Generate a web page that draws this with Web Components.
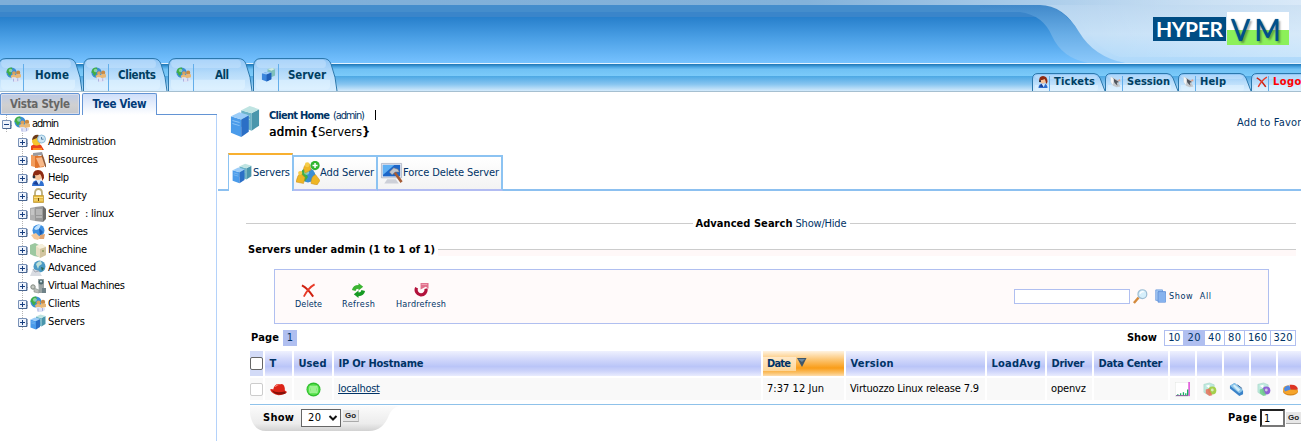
<!DOCTYPE html>
<html lang="en">
<head>
<meta charset="utf-8">
<title>HyperVM - Servers</title>
<style>
html,body{margin:0;height:441px;overflow:hidden;background:#fff}
body{font:11px/14px "DejaVu Sans Condensed","DejaVu Sans",sans-serif;font-stretch:condensed;color:#000}
</style>
</head>
<body>
<hv-app></hv-app>
<script>
const define=(name,html,after)=>customElements.define(name,class extends HTMLElement{
  connectedCallback(){
    if(this.shadowRoot)return;
    const t=document.createElement('template');
    t.innerHTML=typeof html==='function'?html(this):html;
    this.attachShadow({mode:'open'}).append(t.content.cloneNode(true));
    if(after)after(this);
  }
});

/* text set to a known width by tracking */
define('fit-text','<style>:host{display:inline-block;white-space:pre;flex:none}:host([b]){font-weight:bold}</style><slot></slot>',el=>{
  const w=+el.getAttribute('w'),n=el.textContent.length;
  el.style.width='auto';
  const r=el.getBoundingClientRect().width;
  if(w&&r){el.style.letterSpacing=((w-r)/Math.max(1,n-1))+'px';el.style.width=w+'px';}
});

const box=(x,y,l,r,t)=>`<path d="M${x} ${y+2.500}l5.500 1.500v8.500l-5.500-2z" fill="${l}"/><path d="M${x+5.500} ${y+4}l4-2v8l-4 2.500z" fill="${r}"/><path d="M${x} ${y+2.500}l4.500-2 5 1.500-4 2z" fill="${t}"/><path d="M${x+.8} ${y+4.500}l3.800 1M${x+.8} ${y+6}l3.800 1" stroke="${t}" stroke-width=".5" opacity=".8"/>`;
const globe=(x,y,r)=>`<circle cx="${x}" cy="${y}" r="${r}" fill="#3b8fd4"/><path d="M${x-r} ${y}q0-${r} ${r}-${r}l1 2-2 2 1 2-2 3q-2-1-2-3z" fill="#3fae49"/><circle cx="${x-r*.2}" cy="${y-r*.4}" r="${r*.35}" fill="#bfe8d8" opacity=".6"/>`;
const page=c=>`<path d="M2 2.500l6-1.500 5 2v8l-6 3-5-3z" fill="#bfeadf" stroke="#9ccfc0" stroke-width=".5"/><path d="M4 4l4-1v4z" fill="#fff"/><circle cx="11" cy="9" r="4.300" fill="${c[0]}"/><path d="M4 8l4-1 1 3 2 4-3 1-4-3z" fill="${c[1]}" opacity=".85"/><circle cx="11" cy="8.500" r="1.500" fill="#eef6e8" opacity=".7"/>`;
const ICONS={
 clients:globe(6,6,5.500)+'<circle cx="8.500" cy="6.500" r="2" fill="#d9a05c"/><circle cx="13" cy="6" r="2.200" fill="#c98a44"/><path d="M5 9.500q3-3 5.500-.5v3H6zM10 9q3-3 6-1v3l-5 1z" fill="#e8b878"/><path d="M6 11h4l1 1h4v2l-3 2H8z" fill="#dfe3f6"/><path d="M8 12.500v3M12.500 12v3" stroke="#a9afdf"/>',
 servers:box(6,0,'#6db4c8','#4a96ac','#bfe4e2')+box(.5,3,'#4a9bea','#2b6fc6','#9ccdf8'),
 server2:'<path d="M7 2l5-1 3 1v7l-4 2-4-1z" fill="#7fc0bc"/><path d="M7 2l5-1 3 1-4 2z" fill="#cfeae4"/><path d="M1 7l6-2 4 1v7l-5 2.500-5-2z" fill="#3b86dc"/><path d="M1 7l6-2 4 1-5 2z" fill="#9ccbf6"/><path d="M6 8l5-2v7l-5 2.500z" fill="#1f5fb8"/>',
 admin:'<path d="M1 16v-4q5-4 10-1l3 5z" fill="#e8441c"/><path d="M3 16v-2h9v2" fill="#ff8a1c"/><circle cx="6.500" cy="7" r="4.500" fill="#f7c52b"/><path d="M2 6q1-6 7-5l-2 3z" fill="#6a3a1a"/><circle cx="11.500" cy="5" r="4" fill="#cfe6f4" stroke="#7ab0d0" stroke-width=".8"/><path d="M11.500 3v2.200h2" stroke="#3a6890" fill="none" stroke-width=".8"/>',
 resources:'<path d="M1 3l7-1v14l-7-2z" fill="#f29d5c"/><path d="M3 1l9-1 1 3-10 1z" fill="#9a9aa0"/><path d="M5 4h7l2 11-9 1z" fill="#e0742c"/><path d="M6 6l4 9 5-1-1-9z" fill="#f8b888"/><path d="M12 3l4 12" stroke="#8e5a3a" stroke-width="1.500"/>',
 help:'<path d="M2 16q0-6 6-6t6 6z" fill="#2f6fd0"/><path d="M3 14l4-4 2 5z" fill="#1a3f94"/><path d="M6 10h5l-2 5z" fill="#d8ecff"/><circle cx="8" cy="6" r="4" fill="#f6c39a"/><path d="M3 8q-1-8 5-8t6 8l-2 3q0-5-2-7-3 2-5 1v3z" fill="#8e2a12"/><circle cx="4" cy="7" r="1.400" fill="#29333f"/>',
 security:'<path d="M5 8V5q0-4 3.500-4T12 5v3" fill="none" stroke="#bcae7c" stroke-width="1.800"/><path d="M3.500 7.500h10v7h-10z" fill="#e4b83c" stroke="#c09a3c" stroke-width=".8"/><path d="M4 9.500h9M4 12h9" stroke="#f8e08c"/><path d="M8 10h1v3H8z" fill="#6a4a08"/>',
 linux:'<path d="M0 2l5-1v14l-5-1z" fill="#b0b0b0"/><path d="M5 1l8-1v16l-8-1z" fill="#989898"/><path d="M13 0l3 3v10l-3 3z" fill="#6c6c6c"/><path d="M1 4h3M1 6h3M6 4h6M6 6h6M6 8h6M1 8h3M6 11h6" stroke="#e4e4e4" stroke-width=".8"/>',
 services:'<circle cx="8.500" cy="6.500" r="6" fill="#3e8fe0"/><path d="M4 5q3-5 7-4l-2 4-3 1z" fill="#bfe2ff"/><path d="M9 4l4 4-3 4" fill="#1d5fb4"/><path d="M1 11l5-2 4 4-2 3-4-1z" fill="#f4c89a"/><path d="M15 10l-5 1-1 4 5 0z" fill="#e3a470"/>',
 machine:'<path d="M0 3l5-2 4 2v12l-5-1-4-2z" fill="#9cc8a0"/><path d="M6 4l6-2 4 3v8l-6 3-4-3z" fill="#e8dfc4"/><path d="M6 4l6-2 4 3-6 2z" fill="#f6f0dc"/><path d="M10 7l6-2v8l-6 3z" fill="#d2c5a0"/><circle cx="13" cy="9" r="1" fill="#8a9c60"/>',
 advanced:'<circle cx="9.500" cy="6.500" r="6" fill="#4b9ac4"/><path d="M6 4q2-3 5-3l1 3-3 2-1 3z" fill="#bfe0d8"/><path d="M11 7l3 1-2 3z" fill="#2b6a50"/><path d="M0 16l3-7 6 2 3 5z" fill="#d9dce2"/><path d="M3 9l2 3 4-1" stroke="#a6aab4" fill="none"/>',
 vm:'<path d="M8 1h6v14H9z" fill="#9aa4a4"/><circle cx="11" cy="4" r="2.500" fill="#4f6a70"/><circle cx="11" cy="3.500" r="1" fill="#cfe8ee"/><circle cx="3" cy="9" r="2.200" fill="#c7cbc4" stroke="#808880"/><path d="M4 10l5 2v3l-5-1z" fill="#b8bdb8" stroke="#858d88" stroke-width=".6"/><path d="M12 10h4v5h-4z" fill="#6f8288"/>',
 add:globe(8,9.500,4.800)+'<path d="M5 5q1-4 4-3l1 4-4 2zM0 14q1-5 3-6l3 3-1 4zM10 15q0-5 3-6l3 4-2 3z" fill="#eeb625" stroke="#c2871a" stroke-width=".3"/><circle cx="7.500" cy="2.500" r="1.600" fill="#f6cc48"/><circle cx="2.800" cy="8" r="1.400" fill="#f6cc48"/><circle cx="12.700" cy="3" r="3.100" fill="#2fb52f"/><path d="M12.700 1.300v3.400M11 3h3.400" stroke="#fff"/>',
 force:'<path d="M1 1h14v10H1z" fill="#e3e6ee" stroke="#a5adbd" stroke-width=".5"/><path d="M2 2h12v8H2z" fill="#1c66c8"/><path d="M2 2h8L2 9z" fill="#5fb0f4"/><path d="M5 12h6l2 3H3z" fill="#cdd0d8"/><path d="M10 7l5 7" stroke="#a55c35" stroke-width="1.800"/><path d="M6.500 7l3-3 3 1 1 2-3 0-2 2z" fill="#c0c5cd" stroke="#697080" stroke-width=".4"/>',
 x:'<path d="M1 2.500q6 3 12 12" stroke="#cf2010" stroke-width="2.100" fill="none"/><path d="M14.500 1.500Q8 5 3 14.500" stroke="#e83a28" stroke-width="1.900" fill="none"/>',
 session:'<path d="M1 1l13 6-3 2 3 5-5 1-5-2-3-5z" fill="#c4c8cc"/><path d="M4 3l8 5-3 1 1 4-4-4z" fill="#4f545c"/><path d="M1 1l4 3-1 8-3-4z" fill="#f4f4f4"/><path d="M10 6l3-2 1 3z" fill="#e2a08c"/>',
 refresh:'<path d="M1 7.500Q2 2 8 2V0l5 4-5 4V6Q5 6 5 8.500z" fill="#3cb432"/><path d="M15 8.500Q14 14 8 14v2l-5-4 5-4v2q3 0 3-2.500z" fill="#169a22"/>',
 hard:'<path d="M2.800 5A5.300 5.300 0 1 0 12.700 6" stroke="#b3123c" stroke-width="3.400" fill="none"/><path d="M7 7V0h8.500v6l-3-2z" fill="#e0708c"/><path d="M8 1.500h6" stroke="#f1a6b8"/>',
 mag:'<path d="M1 15l5-6" stroke="#d48a3c" stroke-width="2.600"/><circle cx="10" cy="5.500" r="4.700" fill="#d6effb" stroke="#9dbdd4" stroke-width="1.300"/><path d="M7.500 5q1-2.500 4-2" stroke="#fff" stroke-width="1.300" fill="none"/>',
 copy:'<path d="M1 1h9v12H1z" fill="#a9cbf4" stroke="#6a9ade"/><path d="M4 3h10v12H4z" fill="#8ab4ee" stroke="#5a8ad4"/><path d="M6 5h8v10H6z" fill="#86b2ee"/>',
 hat:'<path d="M0 8q2-1 3 0 1-6 5-6 1 1 3 0 3 0 3 7 2 1 2 2-3 3-8 3Q2 13 0 8z" fill="#dc2418"/><path d="M2 9q4 3 12 1l1 2q-3 2-8 1-4-1-5-4z" fill="#861008"/><path d="M5 5q1-2 3-2" stroke="#ff8878" fill="none"/>',
 green:'<circle cx="8" cy="8" r="7.500" fill="#2ebc2c"/><ellipse cx="8" cy="8" rx="6.500" ry="6" fill="#54e04a"/><path d="M5 4h6v8H5z" fill="#9cf290"/><path d="M4.500 4q-1 4 0 8M11.500 4q1 4 0 8" stroke="#d2ffc8" stroke-width=".9"/>',
 chart:'<path d="M0 0h16v16H0z" fill="#fff" stroke="#dfe3df"/><path d="M15 0v15" stroke="#d824d0" stroke-width="1.300"/><path d="M1 14.500h13" stroke="#884898"/><path d="M3 14v-1M6 14v-2M9 14v-3M11.500 14v-2M13.500 14V8" stroke="#16b060" stroke-width="1.400"/>',
 page1:page(['#a4d04c','#e8705c']),
 page2:page(['#8f62d6','#6fcf88']),
 disk:'<path d="M1 4l5-3 9 8v4l-4 2-10-8z" fill="#3a82c8"/><path d="M1 4l5-3 9 8-4 3z" fill="#8cc6ea"/><path d="M4 4l2-1 6 5-2 2z" fill="#d6eef8"/><path d="M9 3l5 4" stroke="#2c5f94"/>',
 pie:'<ellipse cx="8" cy="10" rx="8" ry="4.500" fill="#d6861a"/><path d="M0 8q0-4 6-4.500L8 8l8 1q-1 4-8 4Q0 13 0 8z" fill="#f6a42a"/><path d="M7 3q8-1 9 5L8 8z" fill="#dd3424"/><path d="M1 7q2-4 6-3l1 4-6 2z" fill="#4f88e0"/>'
};
define('ui-icon',el=>`<style>:host{display:block;flex:none;width:${el.getAttribute('s')||16}px;height:${el.getAttribute('h')||el.getAttribute('s')||16}px}svg{display:block;width:100%;height:100%}</style><svg viewBox="0 0 16 16" fill="none" preserveAspectRatio="none">${ICONS[el.getAttribute('n')]}</svg>`);

define('nav-tab',el=>{
  const s=el.hasAttribute('small'),W=s?74:85,H=s?18:33,sep=s?17:25,r=s?5:8;
  const d=s?`M.5 ${H}V6Q.5 .5 6 .5H62Q66 .5 68 5L73 ${H}`:`M.5 ${H}V8Q1 .5 8 .5H70Q76 .5 78 6Q83 19 84 ${H}`;
  return `<style>:host{display:grid;width:${W}px;height:${H}px;flex:none;color:#003f62}svg,div{grid-area:1/1}
  div{display:flex;align-items:center;position:relative}ui-icon{margin:0 0 0 ${s?5:8}px}.l{display:flex;${s?`padding-left:${5}px`:'width:58px;justify-content:center;margin-left:2px;margin-top:1px'}}</style>
  <svg width="${W}" height="${H}" fill="none"><defs><linearGradient id="g" x2="0" y2="1"><stop stop-color="#8dc4f6"/><stop offset=".45" stop-color="#b5dbfa"/><stop offset="1" stop-color="#d8eeff"/></linearGradient></defs>
  <path d="${d}z" fill="url(#g)"/><path d="M4 2h${s?58:66}q3 0 3 ${s?2:4}t-3 ${s?2:4}H8q-5 0-5-${s?3:5}z" fill="#cfe7fc" opacity=".45"/><path d="M3 ${H*.66}h${W-11}v${s?3:6}q0 4-4 4H7q-4 0-4-4z" fill="#e6f5ff" opacity=".5"/>
  <path d="${d}" stroke="#2b78ad"/><path d="M${sep}.5 ${s?3:6}v${H}" stroke="#63aeea"/></svg>
  <div><ui-icon n="${el.getAttribute('icon')}" s="${s?12:15}"></ui-icon><span class="l"><slot></slot></span></div>`;
});

define('hv-header',`<style>:host{display:grid;height:92px;overflow:hidden;font-size:11.500px;grid-template-columns:1301px}
.bg,.fg{grid-area:1/1}.fg{display:flex;justify-content:space-between;position:relative}
.tabs{display:flex;align-self:end;margin-bottom:1px}
.tabs.l{margin-left:-2px}.right{display:flex;flex-direction:column;justify-content:space-between;width:269px}
.right .tabs{align-self:start;width:269px;font-size:11px}.right nav-tab{margin-right:-1px}
</style>
<svg class="bg" width="1301" height="92"><defs>
<linearGradient id="a" x2="0" y2="1"><stop stop-color="#277fcb"/><stop offset=".45" stop-color="#4a9fe5"/><stop offset="1" stop-color="#76c2ff"/></linearGradient>
<linearGradient id="b" x2="0" y2="1"><stop stop-color="#1b75b6"/><stop offset=".12" stop-color="#4fa9e6"/><stop offset=".2" stop-color="#70c1f4"/><stop offset=".45" stop-color="#7bcbfa"/><stop offset=".46" stop-color="#4fa9e4"/><stop offset=".75" stop-color="#87c5f0"/><stop offset="1" stop-color="#d3eafc"/></linearGradient>
<linearGradient id="c"><stop stop-color="#7eaed8"/><stop offset=".62" stop-color="#83b2da"/><stop offset=".82" stop-color="#b0d0ec"/><stop offset="1" stop-color="#c9e0f5"/></linearGradient>
<linearGradient id="d" x2="0" y2="1"><stop stop-color="#b8d5ef"/><stop offset=".5" stop-color="#c5e0f7"/><stop offset="1" stop-color="#aed9fb"/></linearGradient>
<linearGradient id="e" x2="1"><stop stop-color="#fff" stop-opacity="0"/><stop offset="1" stop-color="#fff" stop-opacity=".3"/></linearGradient>
<linearGradient id="f" x2="0" y2="1"><stop stop-color="#4189ca"/><stop offset=".5" stop-color="#68ade6"/><stop offset="1" stop-color="#8cc9fb"/></linearGradient></defs>
<rect width="1301" height="5" fill="url(#c)"/><rect y="5" width="1301" height="7" fill="#448dcc"/><rect y="12" width="1301" height="5" fill="#3a85ca"/><rect y="17" width="1301" height="46" fill="url(#a)"/>
<path d="M980 5h62Q1063 8 1078 30Q1092 55 1125 63H1088Q1062 58 1052 36Q1043 15 1020 12H980z" fill="url(#f)"/>
<path d="M1040 5H1301V63H1125Q1094 57 1079 32Q1063 5 1040 5z" fill="url(#d)"/><path d="M1070 0H1301V57H1120Q1094 50 1070 5z" fill="url(#e)"/>
<rect y="63" width="1301" height="1" fill="#e4f3ff"/><rect y="64" width="1301" height="27" fill="url(#b)"/><rect y="91" width="1301" height="1" fill="#a5bfd0"/></svg>
<div class="fg"><div class="tabs l">
<nav-tab icon="clients"><fit-text b w="34">Home</fit-text></nav-tab><nav-tab icon="clients"><fit-text b w="38">Clients</fit-text></nav-tab><nav-tab icon="clients"><fit-text b w="14">All</fit-text></nav-tab><nav-tab icon="server2"><fit-text b w="38">Server</fit-text></nav-tab></div>
<div class="right"><hv-logo></hv-logo><div class="tabs">
<nav-tab small icon="help"><fit-text b w="41">Tickets</fit-text></nav-tab><nav-tab small icon="session"><fit-text b w="43">Session</fit-text></nav-tab><nav-tab small icon="session"><fit-text b w="26">Help</fit-text></nav-tab><nav-tab small icon="x"><fit-text b w="41" style="color:#f00">Logout</fit-text></nav-tab></div></div></div>`);

define('hv-logo',`<style>:host{display:flex;margin:12px 0 0 121px;width:136px;height:33px;align-items:flex-start;color:#fff}
.h{background:#004d84;width:73px;height:24px;margin:5px 1px 0 0;display:flex;justify-content:center;align-items:center;font:bold 21px/24px Lato,sans-serif;font-stretch:normal}
.v{width:62px;height:33px;background:linear-gradient(#fff 18px,#8cf05a 18px);color:#00508c;display:flex;padding-left:4px;box-sizing:border-box;font:30px/35px Lato,sans-serif;font-stretch:normal;text-shadow:2px 2px 2px #2226,0 0 1px #00508c}.v fit-text{transform:scaleX(.94);transform-origin:0 0}</style>
<div class="h"><fit-text w="67">HYPER</fit-text></div><div class="v"><fit-text w="50">VM</fit-text></div>`);

define('tree-row',el=>`<style>:host{display:flex;height:18px;align-items:center;padding-left:${el.hasAttribute('root')?2:18}px}
svg{margin:0 2px 0 0;flex:none}ui-icon{margin-right:2px}</style>
<svg width="10" height="18" fill="none"><path d="M4.500 0v18M9 10.500h1" stroke="#b4b4b4" stroke-dasharray="1 1"/><path d="M.5 5.500h8v8h-8z" fill="#eef3fc" stroke="#7b93b8"/><path d="M1 13.500h8V6" stroke="#49658f"/><path d="M2 9.500h5${el.hasAttribute('root')?'':'M4.500 7v5'}" stroke="#173f80"/></svg><ui-icon n="${el.getAttribute('icon')}"></ui-icon><slot></slot>`);

define('hv-side',`<style>:host{display:block;width:217px;height:349px;flex:none;box-sizing:border-box}
.tabs{display:flex;height:22px;margin-top:1px;font-size:11.500px;line-height:20px;box-sizing:border-box}
.tabs div{box-sizing:border-box;border:1px solid #6394d4;border-radius:2px 2px 0 0;display:flex;justify-content:center}
.one{width:80px;background:linear-gradient(#bccbe8,#d0d0d0 55%,#c6c8cc);color:#666;margin-right:2px;height:22px;box-shadow:inset 0 0 0 1px #d8dce8}
.two{width:75px;background:linear-gradient(#cfdffa,#fff);border-bottom:0!important;color:#003a78}
.rest{flex:1;border-bottom:1px solid #6394d4}
.tree{border-right:1px solid #b4d2fa;height:326px;box-sizing:border-box;margin-top:0}
</style><div class="tabs"><div class="one"><fit-text b w="60">Vista Style</fit-text></div><div class="two"><fit-text b w="54">Tree View</fit-text></div><span class="rest"></span></div>
<div class="tree"><tree-row root icon="clients"><fit-text w="27">admin</fit-text></tree-row>
<tree-row icon="admin"><fit-text w="68">Administration</fit-text></tree-row><tree-row icon="resources"><fit-text w="50">Resources</fit-text></tree-row><tree-row icon="help"><fit-text w="21">Help</fit-text></tree-row><tree-row icon="security"><fit-text w="39">Security</fit-text></tree-row><tree-row icon="linux"><fit-text w="66">Server  : linux</fit-text></tree-row><tree-row icon="services"><fit-text w="40">Services</fit-text></tree-row><tree-row icon="machine"><fit-text w="39">Machine</fit-text></tree-row><tree-row icon="advanced"><fit-text w="48">Advanced</fit-text></tree-row><tree-row icon="vm"><fit-text w="77">Virtual Machines</fit-text></tree-row><tree-row icon="clients"><fit-text w="32">Clients</fit-text></tree-row><tree-row icon="servers"><fit-text w="37">Servers</fit-text></tree-row></div>`);

define('page-title',`<style>:host{display:flex;height:61px;padding-left:12px;color:#003366}
ui-icon{margin:13px 9px 0 0}.t{margin-top:17px;flex:1}.a{display:flex;gap:3px;height:14px;line-height:14px}.b{color:#000;font-size:13px;line-height:18px;display:flex}
i{width:1px;height:10px;background:#000;margin:1px 0 0 7px}.fav{margin-top:24px;width:64px}</style>
<ui-icon n="servers" s="30" h="33"></ui-icon><div class="t"><div class="a"><fit-text b w="61">Client Home</fit-text><fit-text w="32">(admin)</fit-text><i></i></div><div class="b"><fit-text b w="38" style="font-weight:500;text-shadow:.4px 0 #000">admin</fit-text><fit-text b w="9" style="margin-left:2px"> {</fit-text><fit-text w="44">Servers</fit-text><fit-text b w="6">}</fit-text></div></div>
<div class="fav"><fit-text w="83">Add to Favorites</fit-text></div>`);

define('action-tabs',`<style>:host{display:flex;height:38px;align-items:flex-end;background:linear-gradient(#8cc0f0,#8cc0f0) 0 36px/100% 2px no-repeat;padding-left:10px;color:#003366}
div{box-sizing:border-box;height:36px;border-top:2px solid #8cc3f2;border-right:2px solid #8cc3f2;border-bottom:2px solid #b2bcf2;background:linear-gradient(#fff,#f3f3f3);display:flex;align-items:center;padding-left:2px}
.on{width:65px;height:38px;border-left:1px solid #8cc3f2;border-top:2px solid #f8b030;border-bottom:0;background:#fff;border-right-width:1px;padding-left:3px}
.on+div{border-left:1px solid #8cc3f2}</style>
<div class="on"><ui-icon n="servers" s="20" h="21"></ui-icon><fit-text w="37" style="margin-left:1px">Servers</fit-text></div><div style="width:85px"><ui-icon n="add" s="24"></ui-icon><fit-text w="54">Add Server</fit-text></div><div style="width:125px"><ui-icon n="force" s="23"></ui-icon><fit-text w="96">Force Delete Server</fit-text></div>`);

define('tool-bar',`<style>:host{display:flex;box-sizing:border-box;width:995px;height:55px;margin:0 0 0 56px;border:1px solid #b0bff0;background:#fffafa;color:#003366;font-size:9px;line-height:11px}
.b{display:flex;flex-direction:column;align-items:center;gap:1px;padding-top:13px}
.f{display:flex;margin:17px 57px 0 auto;align-items:center;height:18px}.in{width:114px;height:13px;border:1px solid #b0bff0;background:#fff;margin-right:3px}</style>
<div class="b" style="margin-left:20px"><ui-icon n="x" s="15"></ui-icon><fit-text w="27">Delete</fit-text></div><div class="b" style="margin-left:20px"><ui-icon n="refresh" s="15"></ui-icon><fit-text w="33">Refresh</fit-text></div><div class="b" style="margin-left:21px"><ui-icon n="hard" s="15"></ui-icon><fit-text w="50">Hardrefresh</fit-text></div>
<div class="f"><div class="in"></div><ui-icon n="mag" s="15"></ui-icon><ui-icon n="copy" s="12" h="14" style="margin:0 2px 0 7px"></ui-icon><fit-text w="42">Show  All</fit-text></div>`);

define('page-bar',`<style>:host{display:flex;height:16px;padding:0 5px 0 33px;line-height:16px;align-items:center;color:#003366}
.c{background:#b0bff0;width:14px;text-align:center;margin-left:4px}b,.k{color:#000}.s{margin-left:auto;display:flex}
.n{display:flex;margin-left:7px;border:1px solid #b0bff0;line-height:14px;height:14px}.n span{text-align:center;box-sizing:border-box;border-right:1px solid #b0bff0;display:flex;justify-content:center}</style>
<fit-text class="k" b w="28">Page</fit-text><span class="c">1</span><div class="s"><fit-text class="k" b w="30">Show</fit-text><div class="n"><span style="width:19px"><fit-text w="12">10</fit-text></span><span style="width:21px;background:#b0bff0"><fit-text w="13">20</fit-text></span><span style="width:20px"><fit-text w="13">40</fit-text></span><span style="width:20px"><fit-text w="13">80</fit-text></span><span style="width:26px"><fit-text w="19">160</fit-text></span><span style="width:24px;border:0"><fit-text w="19">320</fit-text></span></div></div>`);

const heads=[['T',7],['Used',28],['IP Or Hostname',85],['Date',24],['Version',43],['LoadAvg',49],['Driver',33],['Data Center',64]];
define('server-table',`<style>:host{display:block;margin-left:32px;width:1051px;border-bottom:1px solid #8fc2ea;color:#003366}
.g{display:grid;gap:2px;grid-template-columns:13px 27px 38px 427px 81px 139px 58px 45px 74px repeat(5,25px);grid-template-rows:25px 22px;padding-bottom:4px}
.g>div{display:flex;align-items:center;background:#f9f9f9;padding-left:4px;color:#000}
.g>.h{background:linear-gradient(#eff1fe,#d4dafb 30%,#bac5f8 62%,#ccd3fa 80%,#e9ecfe);color:#003366}
.g>.first{background:#d3dbf7;padding:0}.g>.o{background:linear-gradient(#fff3e0,#fcc572 35%,#f99d18 68%,#fbc26b 88%,#fdddae)}
.o span{display:flex;background:linear-gradient(#ffe9c8,#fdd698);padding:0 5px 0 4px;margin-left:-4.500px}
.x{box-sizing:border-box;width:13px;height:13px;border:1px solid #666;border-radius:2px;background:#fff}.dis{border-color:#ccc}
.g>.i{padding:0;justify-content:center}a{text-decoration:underline;color:#003366}
.g>.p{padding-left:4px}</style>
<div class="g"><div class="h first"><span class="x"></span></div>${heads.map(([t,w],i)=>`<div class="h ${t==='Date'?'o':''}" style="padding-left:4.500px"><span><fit-text b w="${w}">${t}</fit-text></span>${t==='Date'?'<svg width="10" height="10" style="margin:0 0 2px 1px"><path d="M0 0h9.500L5 9z" fill="#3f5668"/><path d="M1 1h7L5 4z" fill="#6888a4"/></svg>':''}</div>`).join('')}${'<div class="h"></div>'.repeat(5)}
<div style="padding:0"><span class="x dis"></span></div><div class="i"><ui-icon n="hat" s="17" h="15"></ui-icon></div><div class="i"><ui-icon n="green" s="15"></ui-icon></div><div><a><fit-text w="42" style="text-decoration:underline">localhost</fit-text></a></div><div class="p"><fit-text w="57">7:37 12 Jun</fit-text></div><div class="p"><fit-text w="129">Virtuozzo Linux release 7.9</fit-text></div><div></div><div class="p"><fit-text w="35">openvz</fit-text></div><div></div>${['chart','page1','disk','page2','pie'].map(n=>`<div class="i"><ui-icon n="${n}" s="15"></ui-icon></div>`).join('')}</div>`);

define('go-button',`<style>:host{display:block;width:16px;height:12px;box-sizing:border-box;background:#e7e7e7;border-right:1px solid #c4c4c4;border-bottom:1px solid #aaa;font:bold 8px/11px "Liberation Sans",sans-serif;font-stretch:normal;text-align:center;color:#222;flex:none}</style>Go`);
define('table-footer',`<style>:host{display:flex;justify-content:space-between;margin-left:32px;width:1051px;height:27px}
.l{display:grid}.l>*{grid-area:1/1}.c{display:flex;position:relative;padding:4px 0 0 13px}
.k{line-height:18px}.sel{box-sizing:border-box;width:40px;height:18px;border:1px solid #666;background:#fff;margin-left:7px;padding-left:6px;display:flex;align-items:center}
.r{display:flex;padding-top:4px}.in{box-sizing:border-box;width:25px;height:18px;border:2px solid #333;border-color:#222 #777 #777 #222;line-height:15px;padding-left:2px;margin:0 1px 0 3px;background:#fff}</style>
<div class="l"><svg width="150" height="27"><defs><linearGradient id="g" x2="0" y2="1"><stop stop-color="#fbfbfb"/><stop offset=".7" stop-color="#ececec"/><stop offset="1" stop-color="#d2d2d2"/></linearGradient></defs><path d="M0 1H149Q142 3 139 10Q133 26 119 26H16Q3 26 0 9z" fill="url(#g)"/></svg>
<div class="c"><fit-text class="k" b w="31">Show</fit-text><div class="sel"><fit-text w="13">20</fit-text><svg width="10" height="8" style="margin-left:7px"><path d="M1.500 2l3.500 3.500L8.500 2" fill="none" stroke="#111" stroke-width="2"/></svg></div><go-button style="margin:1px 0 0 2px"></go-button></div></div>
<div class="r"><fit-text class="k" b w="29" style="margin-left:1px">Page</fit-text><div class="in">1</div><go-button style="margin:3px -1px 0 0"></go-button></div>`);

define('hv-app',`<style>:host{display:block;width:1301px;height:441px;overflow:hidden}.body{display:flex}.main{width:1083px;flex:none;margin-left:1px;white-space:nowrap}
.rule{display:flex;align-items:center;padding:0 5px 0 28px;gap:3px;height:14px}.rule i{height:1px;background:#ccc;flex:1}
.adv{margin-top:25px}.adv fit-text{margin-top:1px}.sub{margin-top:12px;padding-left:30px}.sub fit-text{margin-top:1px}.sub .w{flex:1;height:7px;margin-top:7px;border-top:1px solid #ccc;background:#fff8f8;box-sizing:border-box}
a{color:#003366}tool-bar{margin-top:13px}page-bar{margin-top:6px}server-table{margin-top:5px}</style>
<hv-header></hv-header><div class="body"><hv-side></hv-side><div class="main"><page-title></page-title><action-tabs></action-tabs>
<div class="rule adv"><i></i><fit-text b w="97">Advanced Search</fit-text><a><fit-text w="51">Show/Hide</fit-text></a><i></i></div>
<div class="rule sub"><fit-text b w="187">Servers under admin (1 to 1 of 1)</fit-text><div class="w"></div></div>
<tool-bar></tool-bar><page-bar></page-bar><server-table></server-table><table-footer></table-footer></div></div>`);
</script>
</body>
</html>
